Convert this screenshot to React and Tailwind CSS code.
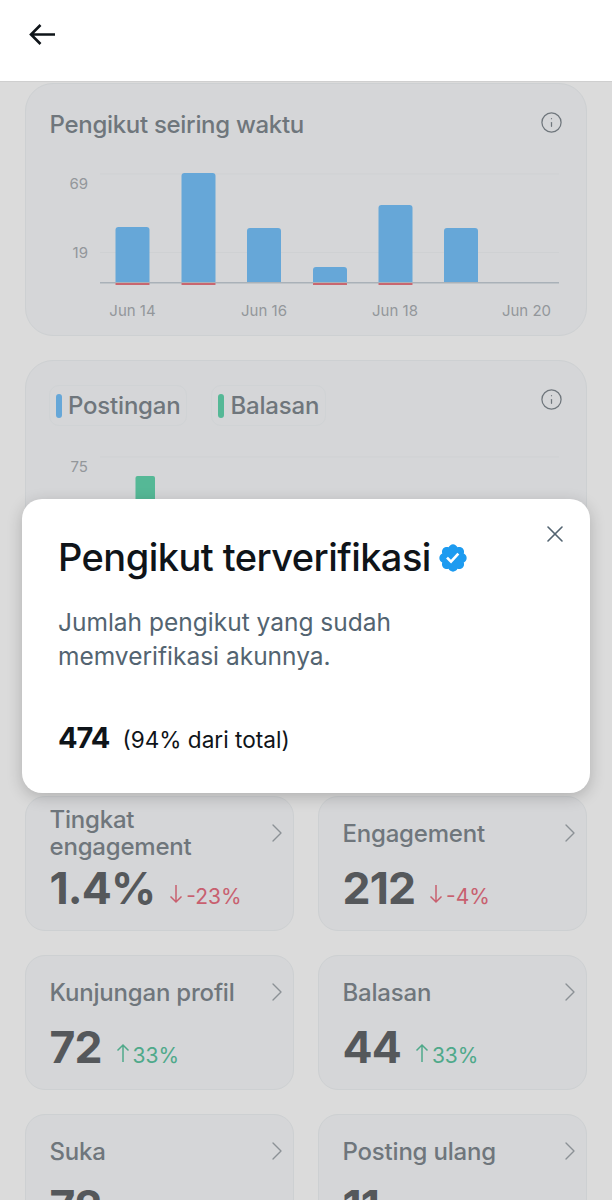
import { ChevronRight, Info, X } from "lucide-react";

const bars = [
    { x: 115.5, top: 227, red: true },
    { x: 181.5, top: 173, red: true },
    { x: 247, top: 228, red: false },
    { x: 313, top: 267, red: true },
    { x: 378.5, top: 205, red: true },
    { x: 444, top: 228, red: false },
];

const dates = [
    { x: 132.5, label: "Jun 14" },
    { x: 264, label: "Jun 16" },
    { x: 395, label: "Jun 18" },
    { x: 526.5, label: "Jun 20" },
];

const metrics = [
    { label: "Tingkat engagement", value: "1.4%", delta: "-23%", up: false, tight: true },
    { label: "Engagement", value: "212", delta: "-4%", up: false },
    { label: "Kunjungan profil", value: "72", delta: "33%", up: true },
    { label: "Balasan", value: "44", delta: "33%", up: true },
    { label: "Suka", value: "72", delta: "33%", up: true },
    { label: "Posting ulang", value: "11", delta: "33%", up: true },
];

const Arrow = ({ up }) => (
    <svg width="14" height="20" viewBox="0 0 14 20" fill="none" stroke="currentColor" strokeWidth="1.5" className={up ? "" : "rotate-180"}>
        <path d="M7 19V2M1.5 7.5 7 2l5.5 5.5" />
    </svg>
);

const Legend = ({ color, label }) => (
    <div className="flex h-[41px] items-center gap-[6px] rounded-[10px] border border-[#d0d3d5] pl-[6px] pr-[6px] text-[24px] font-medium tracking-[-0.2px] text-[#6f767c]">
        <span className={`h-[24px] w-[6px] rounded-full ${color}`}></span>
        {label}
    </div>
);

const MetricCard = ({ label, value, delta, up, tight }) => (
    <div className="h-[135px] rounded-[20px] border border-[#cdd0d2] bg-[#d5d6d8] pl-[23.5px]">
        <div className="flex h-[72px] items-center justify-between">
            <div className={`text-[24px] leading-[27px] font-medium tracking-[-0.2px] text-[#6f767c] ${tight ? "w-[180px]" : ""}`}>{label}</div>
            <ChevronRight size={32} strokeWidth={1} className="text-[#8b9196]" />
        </div>
        <div className="mt-[4px] flex items-baseline gap-[14px]">
            <span className="text-[44.5px] leading-[30px] font-bold tracking-[-0.9px] text-[#55585b]">{value}</span>
            <span className={`flex items-baseline gap-[3px] text-[21px] leading-[30px] ${up ? "text-[#4fa98a]" : "text-[#c8606f]"}`}>
                <Arrow up={up} />
                {delta}
            </span>
        </div>
    </div>
);

export default function App() {
    return (
        <div className="relative h-[1200px] w-[612px] overflow-hidden bg-[#dbdbdb] font-['Inter',sans-serif]">
            {/* Header */}
            <div className="flex h-[82px] items-start border-b border-[#cfcfcf] bg-white pl-[29px] pt-[24px]">
                <svg width="27" height="22" viewBox="0 0 27 22" fill="none" stroke="#0f1419" strokeWidth="2.6">
                    <path d="M26 10.5H2.5M11.5 1 2 10.5l9.5 9.5" />
                </svg>
            </div>

            <div className="flex flex-col gap-[24px] px-[25px] pt-[1px]">
                {/* Followers chart */}
                <div className="relative h-[253px] rounded-[28px] border border-[#cdd0d2] bg-[#d5d6d8]">
                    <div className="pl-[23.5px] pt-[26px] text-[24px] leading-[29px] font-medium tracking-[-0.3px] text-[#6f767c]">Pengikut seiring waktu</div>
                    <Info size={23} strokeWidth={1.3} className="absolute right-[23px] top-[27px] text-[#6f767c]" />
                    <svg width="562" height="168" viewBox="25 160 562 168" className="absolute left-[-1px] top-[76px]">
                        <line x1="100" x2="559" y1="174" y2="174" stroke="#cfd1d3" strokeWidth="1" />
                        <line x1="100" x2="559" y1="252.5" y2="252.5" stroke="#cfd1d3" strokeWidth="1" />
                        {bars.map((b) => (
                            <path key={b.x} d={`M${b.x} 283V${b.top + 3}q0-3 3-3h28q3 0 3 3V283z`} fill="#66a7d8" />
                        ))}
                        <rect x="100" y="282" width="459" height="1.5" fill="#a9b1b8" />
                        {bars.filter((b) => b.red).map((b) => (
                            <rect key={b.x} x={b.x} y="283" width="34" height="2" rx="0.5" fill="#c9666f" />
                        ))}
                        <text x="88" y="189" textAnchor="end" fontSize="15" fill="#93979b">69</text>
                        <text x="88" y="258" textAnchor="end" fontSize="15" fill="#93979b">19</text>
                        {dates.map((d) => (
                            <text key={d.label} x={d.x} y="316" textAnchor="middle" fontSize="15" fill="#93979b">{d.label}</text>
                        ))}
                    </svg>
                </div>

                {/* Posts and replies chart */}
                <div className="relative h-[412px] rounded-[28px] border border-[#cdd0d2] bg-[#d5d6d8]">
                    <div className="flex gap-[24px] pl-[23px] pt-[24px]">
                        <Legend color="bg-[#66a7d8]" label="Postingan" />
                        <Legend color="bg-[#55b896]" label="Balasan" />
                    </div>
                    <Info size={23} strokeWidth={1.3} className="absolute right-[23px] top-[27px] text-[#6f767c]" />
                    <svg width="562" height="100" viewBox="25 440 562 100" className="absolute left-[-1px] top-[79px]">
                        <line x1="100" x2="559" y1="457" y2="457" stroke="#cfd1d3" strokeWidth="1" />
                        <text x="88" y="472" textAnchor="end" fontSize="15" fill="#93979b">75</text>
                        <rect x="135.5" y="476" width="19.5" height="40" rx="2" fill="#55b896" />
                    </svg>
                </div>

                {/* Metric cards */}
                <div className="grid grid-cols-[269px_269px] gap-x-[24px] gap-y-[24px]">
                    {metrics.map((m) => (
                        <MetricCard key={m.label} {...m} />
                    ))}
                </div>
            </div>

            {/* Modal */}
            <div className="absolute left-[22px] top-[499px] h-[294px] w-[568px] rounded-[20px] bg-white pl-[36px] pt-[33px] shadow-[0_4px_16px_rgba(0,0,0,0.2)]">
                <X size={28} strokeWidth={1.4} className="absolute right-[21px] top-[21px] text-[#536471]" />
                <div className="flex items-center gap-[6px]">
                    <span className="text-[38px] leading-[50px] font-medium tracking-[-0.55px] text-[#0f1419]">Pengikut terverifikasi</span>
                    <svg width="32" height="32" viewBox="0 0 22 22" className="mt-[2px]">
                        <path fill="#1d9bf0" d="M20.396 11c-.018-.646-.215-1.275-.57-1.816-.354-.54-.852-.972-1.438-1.246.223-.607.27-1.264.14-1.897-.131-.634-.437-1.218-.882-1.687-.47-.445-1.053-.75-1.687-.882-.633-.13-1.29-.083-1.897.14-.273-.587-.704-1.086-1.245-1.44S11.647 1.62 11 1.604c-.646.017-1.273.213-1.813.568s-.969.854-1.24 1.44c-.608-.223-1.267-.272-1.902-.14-.635.13-1.22.436-1.69.882-.445.47-.749 1.055-.878 1.688-.13.633-.08 1.29.144 1.896-.587.274-1.087.705-1.443 1.245-.356.54-.555 1.17-.574 1.817.02.647.218 1.276.574 1.817.356.54.856.972 1.443 1.245-.224.606-.274 1.263-.144 1.896.13.634.433 1.218.877 1.688.47.443 1.054.747 1.687.878.633.132 1.29.084 1.897-.136.274.586.705 1.084 1.246 1.439.54.354 1.17.551 1.816.569.647-.016 1.276-.213 1.817-.567s.972-.854 1.245-1.44c.604.239 1.266.296 1.903.164.636-.132 1.22-.447 1.68-.907.46-.46.776-1.044.908-1.681s.075-1.299-.165-1.903c.586-.274 1.084-.705 1.439-1.246.354-.54.551-1.17.569-1.816z" />
                        <path fill="#fff" d="M9.662 14.85l-3.429-3.428 1.293-1.302 2.072 2.072 4.4-4.794 1.347 1.246z" />
                    </svg>
                </div>
                <div className="mt-[23px] w-[400px] text-[24.5px] leading-[34px] text-[#536471]">Jumlah pengikut yang sudah memverifikasi akunnya.</div>
                <div className="mt-[45px] flex items-baseline gap-[13px] text-[#0f1419]">
                    <span className="text-[29px] leading-[40px] font-bold tracking-[-1px]">474</span>
                    <span className="text-[22.6px]">(94% dari total)</span>
                </div>
            </div>
        </div>
    );
}
